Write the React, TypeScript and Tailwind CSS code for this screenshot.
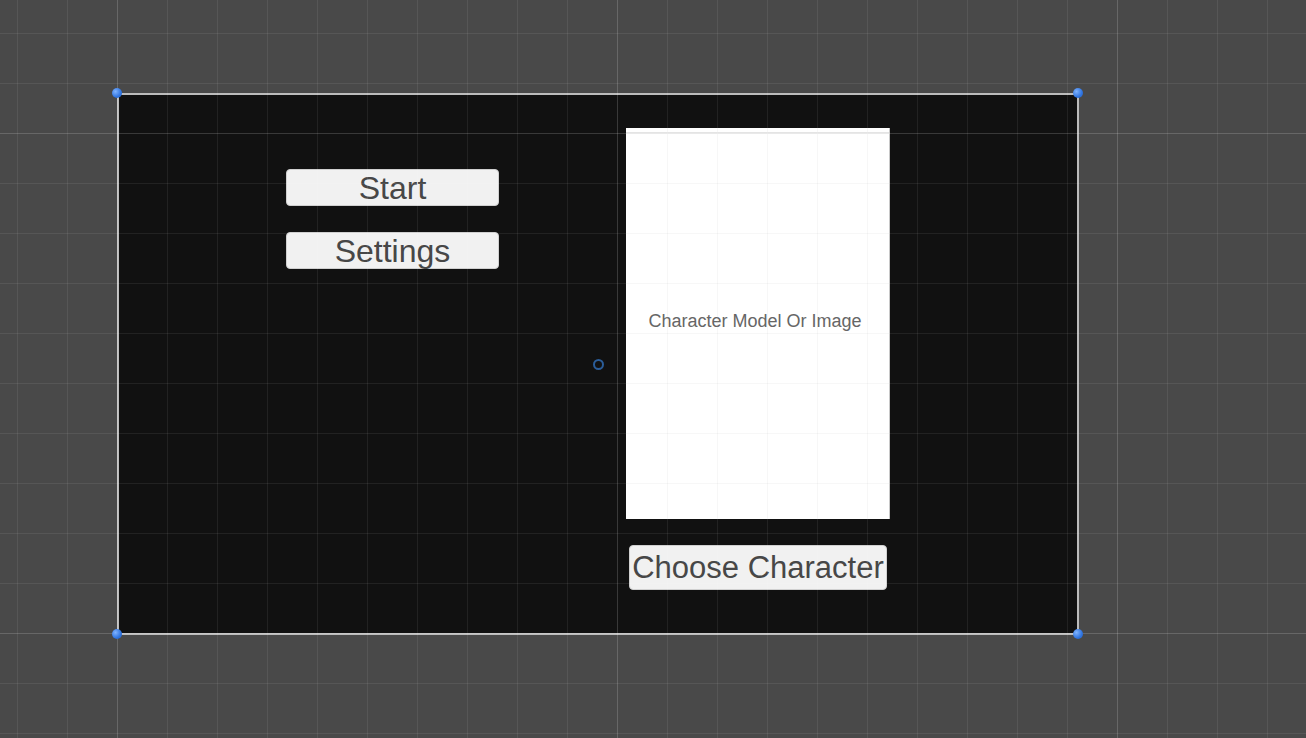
import React from "react";

function Dot({ className }: { className: string }) {
  return (
    <div
      className={
        "absolute w-[10px] h-[10px] rounded-full bg-[radial-gradient(circle_at_35%_35%,#7fb3ff,#2f74e0_60%,#2560c0)] " +
        className
      }
    />
  );
}

export default function App() {
  return (
    <div
      className="relative w-[1306px] h-[738px] overflow-hidden bg-[#494949] pt-[93px] pl-[117px]"
      style={{ fontFamily: '"Liberation Sans", Arial, sans-serif' }}
    >
      {/* Canvas */}
      <div className="relative w-[962px] h-[542px] border-2 border-[#bcbcbc] bg-[#111111] flex">
        <div className="w-[507px] pl-[167px] pt-[74px] flex flex-col gap-[26px]">
          <button className="w-[213px] h-[37px] rounded-[4px] bg-[#f1f1f1] border border-[#d0d0d0] text-[32px] leading-none text-[#474747] flex items-center justify-center">
            Start
          </button>
          <button className="w-[213px] h-[37px] rounded-[4px] bg-[#f1f1f1] border border-[#d0d0d0] text-[32px] leading-none text-[#474747] flex items-center justify-center">
            Settings
          </button>
        </div>
        <div className="pt-[33px] flex flex-col">
          <div className="relative w-[264px] h-[391px] bg-white border-r border-[#c8c8c8] flex items-center justify-center bg-[linear-gradient(to_right,rgba(0,0,0,0.035)_1px,transparent_1px),linear-gradient(to_bottom,rgba(0,0,0,0.035)_1px,transparent_1px)] bg-[size:50px_50px] bg-[position:41px_5px]">
            <div className="absolute left-0 right-0 top-[4px] h-[2px] bg-[#e4e4e4]" />
            <span className="text-[18px] text-[#666666] -mt-[5px] -ml-[5px]">Character Model Or Image</span>
          </div>
          <button className="mt-[26px] ml-[3px] w-[258px] h-[45px] rounded-[4px] bg-[#f1f1f1] border border-[#d0d0d0] text-[31px] leading-none text-[#474747] flex items-center justify-center">
            Choose Character
          </button>
        </div>
        {/* pivot */}
        <div className="absolute left-[474px] top-[264px] w-[11px] h-[11px] rounded-full border-2 border-[#2b5d99]" />
      </div>

      {/* grid overlay */}
      <div className="pointer-events-none absolute inset-0 bg-[linear-gradient(to_right,rgba(255,255,255,0.07)_1px,transparent_1px),linear-gradient(to_bottom,rgba(255,255,255,0.07)_1px,transparent_1px)] bg-[size:50px_50px] bg-[position:17px_33px]" />
      <div className="pointer-events-none absolute inset-0 bg-[linear-gradient(to_right,rgba(255,255,255,0.1)_1px,transparent_1px),linear-gradient(to_bottom,rgba(255,255,255,0.1)_1px,transparent_1px)] bg-[size:500px_500px] bg-[position:117px_133px]" />

      {/* corner handles */}
      <Dot className="left-[112px] top-[88px]" />
      <Dot className="left-[1073px] top-[88px]" />
      <Dot className="left-[112px] top-[629px]" />
      <Dot className="left-[1073px] top-[629px]" />
    </div>
  );
}
